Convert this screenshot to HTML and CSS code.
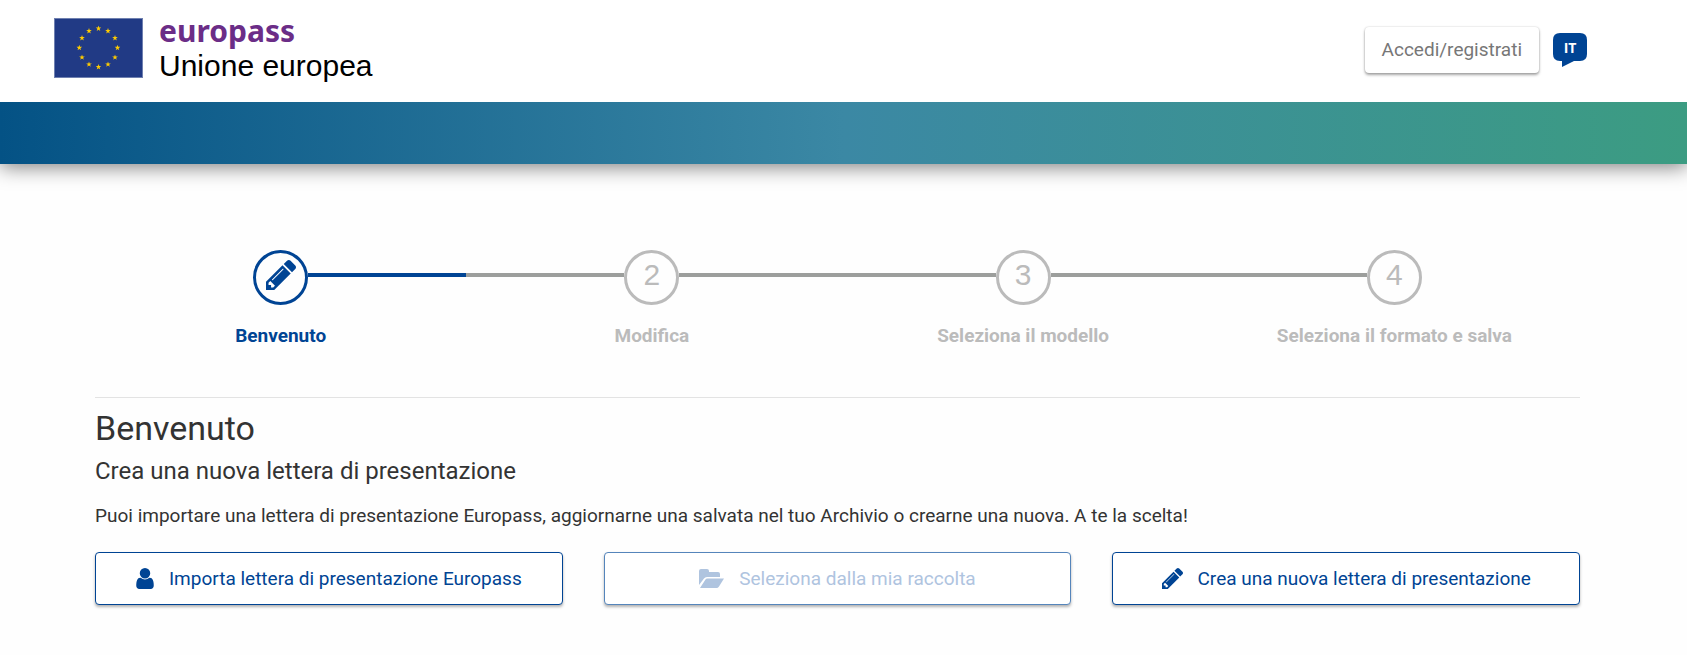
FILE: index.html
```
<!DOCTYPE html>
<html lang="it">
<head>
  <meta charset="UTF-8">
  <meta name="viewport" content="width=device-width, initial-scale=1.0">
  <title>Europass - Lettera di presentazione</title>
  <link rel="stylesheet" href="styles.css">
</head>
<body>
  <!-- Shared icon shapes -->
  <svg class="sprite" aria-hidden="true">
    <symbol id="pencil" viewBox="128 149 1515 1515">
      <path d="M491 1536l91-91-235-235-91 91v107h128v128h107zm523-928q0-22-22-22-10 0-17 7l-542 542q-7 7-7 17 0 22 22 22 10 0 17-7l542-542q7-7 7-17zm-54-192l416 416-832 832h-416v-416zm683 96q0 53-37 90l-166 166-416-416 166-165q36-38 90-38 53 0 91 38l235 234q37 39 37 91z"/>
    </symbol>
    <symbol id="star" viewBox="-10 -10 20 20">
      <path d="M0-10L2.3-3.1H9.5L3.7 1.2L5.9 8.1L0 3.8L-5.9 8.1L-3.7 1.2L-9.5-3.1H-2.3Z"/>
    </symbol>
  </svg>

  <header class="header">
    <a class="logo" href="#">
      <svg class="flag" viewBox="0 0 89 60" role="img" aria-label="Unione europea">
        <rect class="flag-field" x="0.5" y="0.5" width="88" height="59"/>
        <g class="flag-stars">
          <use href="#star" x="41.5" y="7.5" width="6" height="6"/>
          <use href="#star" x="51" y="10" width="6" height="6"/>
          <use href="#star" x="58" y="17" width="6" height="6"/>
          <use href="#star" x="60.5" y="26.8" width="6" height="6"/>
          <use href="#star" x="58" y="36.4" width="6" height="6"/>
          <use href="#star" x="51" y="43.4" width="6" height="6"/>
          <use href="#star" x="41.5" y="46" width="6" height="6"/>
          <use href="#star" x="32" y="43.4" width="6" height="6"/>
          <use href="#star" x="25" y="36.4" width="6" height="6"/>
          <use href="#star" x="22.3" y="26.8" width="6" height="6"/>
          <use href="#star" x="25" y="17" width="6" height="6"/>
          <use href="#star" x="32" y="10" width="6" height="6"/>
        </g>
      </svg>
      <span class="logo-text">
        <span class="logo-name">europass</span>
        <span class="logo-union">Unione europea</span>
      </span>
    </a>
    <div class="header-actions">
      <button class="login" type="button">Accedi/registrati</button>
      <button class="language" type="button">
        <svg class="bubble" viewBox="0 0 34 34" aria-hidden="true">
          <path d="M7 0H27Q34 0 34 7V21Q34 28 27 28H21L9 34V28H7Q0 28 0 21V7Q0 0 7 0Z"/>
        </svg>
        <span class="language-code">IT</span>
      </button>
    </div>
  </header>
  <div class="band"></div>

  <main class="container">
    <ol class="stepper">
      <li class="step active">
        <div class="track">
          <span class="line hidden"></span>
          <span class="circle"><svg class="step-icon" aria-hidden="true"><use href="#pencil"/></svg></span>
          <span class="line"></span>
        </div>
        <span class="label">Benvenuto</span>
      </li>
      <li class="step">
        <div class="track">
          <span class="line"></span>
          <span class="circle">2</span>
          <span class="line"></span>
        </div>
        <span class="label">Modifica</span>
      </li>
      <li class="step">
        <div class="track">
          <span class="line"></span>
          <span class="circle">3</span>
          <span class="line"></span>
        </div>
        <span class="label">Seleziona il modello</span>
      </li>
      <li class="step">
        <div class="track">
          <span class="line"></span>
          <span class="circle">4</span>
          <span class="line hidden"></span>
        </div>
        <span class="label">Seleziona il formato e salva</span>
      </li>
    </ol>

    <section class="welcome">
      <h1>Benvenuto</h1>
      <h2>Crea una nuova lettera di presentazione</h2>
      <p>Puoi importare una lettera di presentazione Europass, aggiornarne una salvata nel tuo Archivio o crearne una nuova. A te la scelta!</p>
      <div class="choices">
        <button class="choice" type="button">
          <svg class="icon user" viewBox="256 128 1280 1536" aria-hidden="true">
            <path d="M1536 1399q0 109-62.5 187t-150.5 78h-854q-88 0-150.5-78t-62.5-187q0-85 8.5-160.5t31.5-152 58.5-131 94-89 134.5-34.5q131 128 313 128t313-128q76 0 134.5 34.5t94 89 58.5 131 31.5 152 8.5 160.5zm-256-887q0 159-112.5 271.5t-271.5 112.5-271.5-112.5-112.5-271.5 112.5-271.5 271.5-112.5 271.5 112.5 112.5 271.5z"/>
          </svg>
          Importa lettera di presentazione Europass
        </button>
        <button class="choice" type="button" disabled>
          <svg class="icon folder" viewBox="0 0 25 19" aria-hidden="true">
            <path d="M0 16V2Q0 0 2 0H8Q10 0 10 2V3H19Q21 3 21 5V8H8Q6 8 5 9.500Z"/>
            <path d="M1 19L6.500 10.500Q7 9.500 8.500 9.500H25L20 17.500Q19 19 17.500 19Z"/>
          </svg>
          Seleziona dalla mia raccolta
        </button>
        <button class="choice" type="button">
          <svg class="icon" aria-hidden="true"><use href="#pencil"/></svg>
          Crea una nuova lettera di presentazione
        </button>
      </div>
    </section>
  </main>
</body>
</html>
```
FILE: styles.css
```
* {
  box-sizing: border-box;
}

body {
  margin: 0;
  font-family: Roboto, Arial, sans-serif;
  font-size: 19px;
  line-height: 28px;
  color: #333;
  background-color: #fefefe;
}

button {
  font: inherit;
  cursor: pointer;
}

.sprite {
  display: none;
}

.header {
  position: relative;
  z-index: 1;
  display: flex;
  justify-content: space-between;
  align-items: center;
  min-height: 102px;
  padding: 0 100px 2px 54px;
  background-color: #fff;
}

.logo {
  display: flex;
  align-items: center;
  gap: 16px;
  padding-bottom: 4px;
  color: #000;
  text-decoration: none;
}

.flag {
  width: 89px;
  height: 60px;
}

.flag-field {
  fill: #213a85;
  stroke: #6f80b0;
}

.flag-stars {
  fill: #fc0;
}

.logo-text {
  display: flex;
  flex-direction: column;
  line-height: 35px;
}

.logo-name {
  font-family: "Noto Sans", sans-serif;
  font-size: 30px;
  font-weight: 700;
  color: #6b2d87;
}

.logo-union {
  font-family: "Liberation Sans", Arial, sans-serif;
  font-size: 30px;
}

.header-actions {
  display: flex;
  align-items: center;
  gap: 14px;
}

.login {
  height: 46px;
  padding: 0 17px;
  color: #777;
  background-color: #fff;
  border: none;
  border-radius: 4px;
  box-shadow: 0 2px 3px rgba(0, 0, 0, 0.35), 0 0 2px rgba(0, 0, 0, 0.2);
}

.language {
  display: grid;
  padding: 0;
  background: none;
  border: none;
}

.bubble,
.language-code {
  grid-area: 1 / 1;
}

.bubble {
  width: 34px;
  height: 34px;
  fill: #004494;
}

.language-code {
  font-family: "Open Sans", sans-serif;
  font-size: 14px;
  font-weight: 700;
  line-height: 30px;
  color: #fff;
}

.band {
  height: 62px;
  background: linear-gradient(to right, #045285, #3b88a4 50%, #3c9c82);
  box-shadow: 0 3px 20px rgba(0, 0, 0, 0.5);
}

.container {
  padding: 86px 107px 48px 95px;
}

.stepper {
  display: grid;
  grid-template-columns: repeat(4, 1fr);
  margin: 0;
  padding: 0 0 47px;
  list-style: none;
  border-bottom: 1px solid #e3e3e3;
}

.step {
  color: #bbb;
  text-align: center;
}

.track {
  display: flex;
  margin-bottom: 17px;
}

.line {
  flex: 1;
  height: 4px;
  margin-top: 23px;
  background-color: #9c9e9c;
}

.line.hidden {
  visibility: hidden;
}

.circle {
  display: flex;
  justify-content: center;
  width: 55px;
  height: 55px;
  border: 3px solid #bbb;
  border-radius: 50%;
  font-family: "Liberation Sans", Arial, sans-serif;
  font-size: 30px;
  line-height: 44px;
}

.label {
  font-weight: 700;
}

.step.active {
  color: #004494;
}

.active .circle {
  border-color: #004494;
}

.active .line {
  background-color: #004494;
}

.step-icon {
  width: 30px;
  height: 30px;
  margin-top: 7px;
  fill: #004494;
}

.welcome h1 {
  margin: 10px 0 7px;
  font-size: 34px;
  font-weight: 400;
  line-height: 40px;
}

.welcome h2 {
  margin: 0 0 15px;
  font-size: 24px;
  font-weight: 400;
  line-height: 32px;
}

.welcome p {
  margin: 0 0 22px;
}

.choices {
  display: grid;
  grid-template-columns: repeat(3, 1fr);
  gap: 41px;
}

.choice {
  display: flex;
  justify-content: center;
  align-items: center;
  gap: 15px;
  height: 53px;
  padding: 0 16px;
  color: #004494;
  background-color: #fff;
  border: 1px solid #004494;
  border-radius: 4px;
  box-shadow: 0 2px 3px rgba(0, 0, 0, 0.3);
}

.choice:disabled {
  color: #afc4df;
  border-color: #5585bb;
  cursor: default;
}

.icon {
  width: 21px;
  height: 21px;
  fill: currentColor;
}

.icon.user {
  width: 18px;
}

.icon.folder {
  width: 25px;
  height: 19px;
}
```
